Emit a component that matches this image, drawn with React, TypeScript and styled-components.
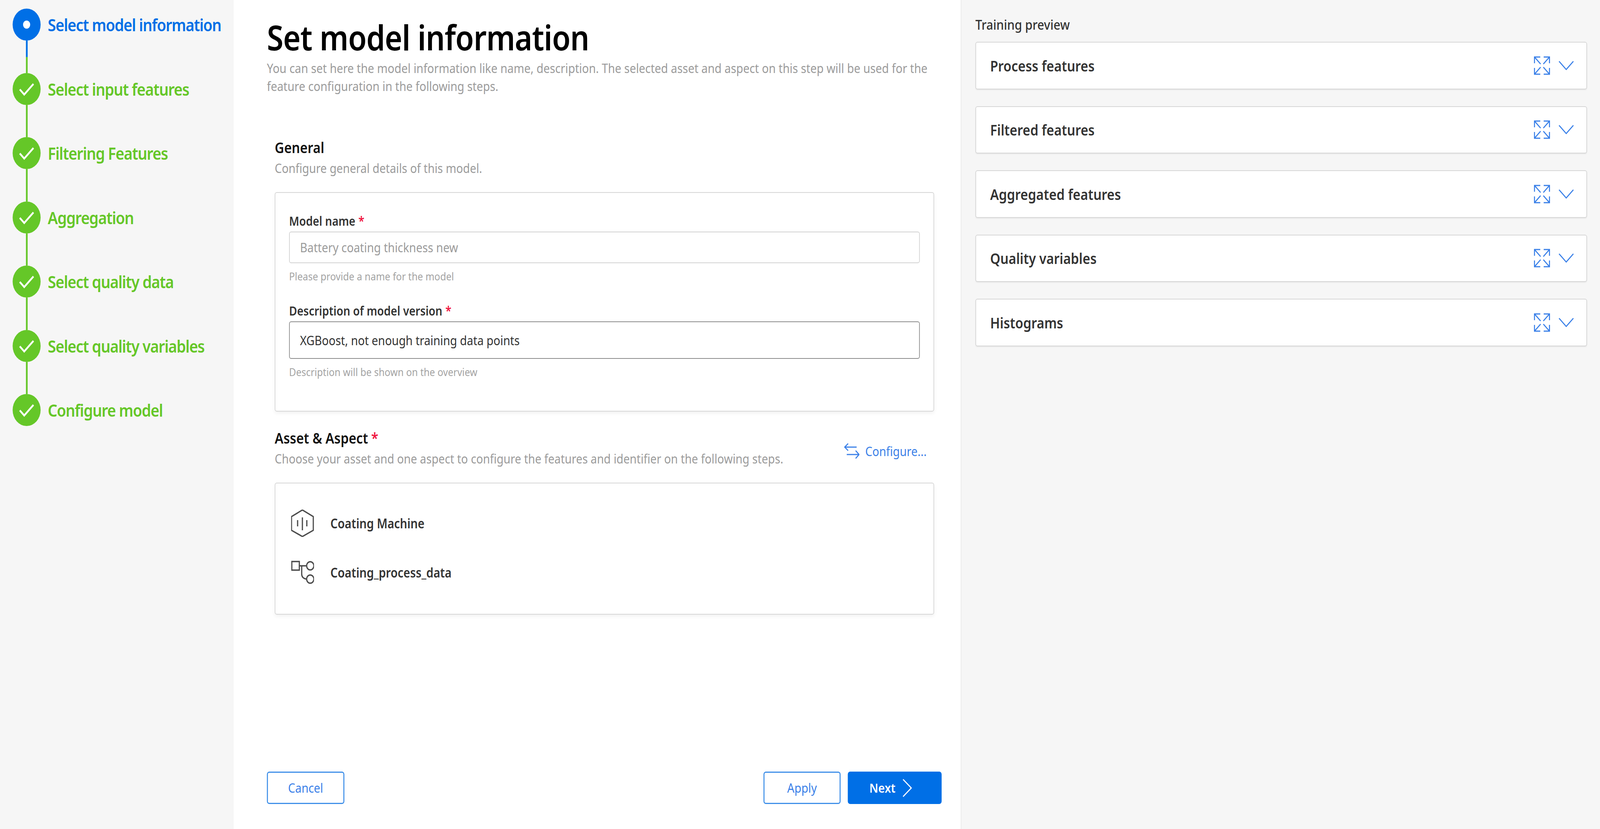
import React from 'react';
import styled, { createGlobalStyle } from 'styled-components';

const GlobalStyle = createGlobalStyle`
  html, body {
    margin: 0;
    width: 100%;
    height: 100%;
    overflow: hidden;
    background: #fff;
  }
  body, input, button {
    font-family: "Noto Sans", "Open Sans", sans-serif;
  }
  * {
    box-sizing: border-box;
  }
`;

const DESIGN_WIDTH = 4688;
const BLUE = '#006fe6';
const GREEN = '#65c728';

const Page = styled.div`
  display: grid;
  grid-template-columns: 685px 2130px 1873px;
  width: ${DESIGN_WIDTH}px;
  height: 2123px;
  transform-origin: 0 0;
`;

const Sidebar = styled.nav`
  background: #f6f6f6;
  padding: 22px 0 0 37px;
`;

const Step = styled.div<{ $active?: boolean }>`
  display: flex;
  gap: 21px;
  height: 164.5px;
  color: ${(p) => (p.$active ? BLUE : GREEN)};
`;

const StepTrack = styled.div`
  display: flex;
  flex-direction: column;
  align-items: center;
  width: 82px;
`;

const StepCircle = styled.div<{ $active?: boolean }>`
  flex: none;
  width: 82px;
  height: 82px;
  border-radius: 50%;
  background: ${(p) => (p.$active ? BLUE : GREEN)};
  display: flex;
  align-items: center;
  justify-content: center;
`;

const Connector = styled.div<{ $active?: boolean }>`
  flex: 1;
  width: 5px;
  background: ${(p) =>
    p.$active ? `linear-gradient(${BLUE} 0 50%, ${GREEN} 50% 100%)` : GREEN};
`;

const StepLabel = styled.span`
  font-size: 44px;
  font-weight: 600;
  line-height: 82px;
  letter-spacing: -1.45px;
  white-space: nowrap;
`;

const Main = styled.main`
  display: flex;
  flex-direction: column;
  padding: 45px 56px 64px 97px;
  background: #fff;
`;

const Title = styled.h1`
  margin: 0;
  font-size: 88px;
  font-weight: 600;
  line-height: 100px;
  color: #000;
  letter-spacing: -1px;
`;

const Lead = styled.p`
  margin: 7px 0 0;
  font-size: 33px;
  line-height: 46px;
  color: #9b9b9b;
`;

const Section = styled.section<{ $top: number }>`
  margin: ${(p) => p.$top}px 22px 0 23px;
`;

const SectionHead = styled.div`
  display: flex;
  justify-content: space-between;
`;

const SectionTitle = styled.h2`
  margin: 0;
  font-size: 38px;
  font-weight: 600;
  line-height: 50px;
  color: #111;
`;

const SectionText = styled.p`
  margin: 9px 0 0;
  font-size: 32.8px;
  line-height: 40px;
  color: #9b9b9b;
`;

const Required = styled.span`
  color: #f0163f;
  margin-left: 9px;
`;

const Card = styled.div<{ $height: number }>`
  height: ${(p) => p.$height}px;
  margin-top: 41px;
  background: #fff;
  border: 2px solid #d6d6d6;
  border-radius: 6px;
  box-shadow: 0 5px 10px rgba(0, 0, 0, 0.05);
`;

const FormCard = styled(Card)`
  padding: 52px 40px 0;
`;

const Label = styled.label`
  display: block;
  font-size: 32px;
  font-weight: 600;
  line-height: 40px;
  color: #333;
`;

const Input = styled.input<{ $filled?: boolean }>`
  display: block;
  width: 100%;
  height: ${(p) => (p.$filled ? 96 : 81)}px;
  margin-top: 7px;
  padding: 0 30px;
  border: 2px solid ${(p) => (p.$filled ? '#8c8c8c' : '#d2d2d2')};
  border-radius: 6px;
  background: #fff;
  font-size: 33px;
  color: #333;
  outline: none;

  &::placeholder {
    color: #9b9b9b;
    opacity: 1;
  }
`;

const Hint = styled.div`
  margin: 18px 0 54px;
  font-size: 28px;
  line-height: 30px;
  color: #a3a3a3;
`;

const ConfigureButton = styled.button`
  display: flex;
  align-items: center;
  gap: 17px;
  height: 40px;
  margin: 39px 22px 0 0;
  padding: 0;
  border: 0;
  background: none;
  font-size: 33px;
  color: #3a80e8;
`;

const AssetList = styled(Card)`
  display: flex;
  flex-direction: column;
  gap: 56px;
  padding: 67px 0 0 46px;
`;

const AssetRow = styled.div`
  display: flex;
  align-items: center;
  gap: 48px;
  height: 70px;
  font-size: 33.6px;
  font-weight: 600;
  color: #333;
`;

const AssetIcon = styled.svg`
  flex: none;
  width: 67px;
  height: 70px;
  fill: none;
  stroke: #4a4a4a;
  stroke-width: 3.5;
`;

const Footer = styled.footer`
  display: flex;
  align-items: center;
  gap: 21px;
  margin-top: auto;
`;

const Button = styled.button<{ $primary?: boolean; $width: number }>`
  display: flex;
  align-items: center;
  justify-content: center;
  gap: 20px;
  width: ${(p) => p.$width}px;
  height: 83px;
  padding: 0 ${(p) => (p.$primary ? 24 : 0)}px 0 0;
  border: 3px solid ${(p) => (p.$primary ? BLUE : '#3f8fe8')};
  border-radius: 7px;
  background: ${(p) => (p.$primary ? BLUE : '#fff')};
  font-size: 33px;
  font-weight: ${(p) => (p.$primary ? 600 : 400)};
  color: ${(p) => (p.$primary ? '#fff' : '#3a80e8')};
`;

const Spacer = styled.div`
  flex: 1;
`;

const Preview = styled.aside`
  display: flex;
  flex-direction: column;
  gap: 43px;
  padding: 41px 38px 0 41px;
  background: #f6f6f6;
  border-left: 2px solid #ebebeb;
`;

const PreviewTitle = styled.h3`
  margin: 0 0 -21px;
  font-size: 35px;
  font-weight: 500;
  line-height: 44px;
  color: #333;
`;

const Panel = styled.div`
  display: flex;
  align-items: center;
  height: 121.5px;
  padding: 0 36px 0 41px;
  background: #fff;
  border: 2px solid #d6d6d6;
  border-radius: 6px;
  box-shadow: 0 2px 3px rgba(0, 0, 0, 0.06);
`;

const PanelTitle = styled.span`
  flex: 1;
  font-size: 38px;
  font-weight: 600;
  color: #333;
`;

const PanelIcons = styled.div`
  display: flex;
  align-items: center;
  gap: 24px;
`;

const BlueIcon = styled.svg`
  flex: none;
  fill: none;
  stroke: #3a80e8;
  stroke-width: 3;
`;

const steps = [
  'Select model information',
  'Select input features',
  'Filtering Features',
  'Aggregation',
  'Select quality data',
  'Select quality variables',
  'Configure model',
];

const panels = [
  'Process features',
  'Filtered features',
  'Aggregated features',
  'Quality variables',
  'Histograms',
];

const CheckMark = () => (
  <svg width="82" height="82" viewBox="0 0 82 82" fill="none">
    <path d="M21 42 34 55 61 28" stroke="#fff" strokeWidth="5" />
  </svg>
);

const ActiveDot = () => (
  <svg width="82" height="82" viewBox="0 0 82 82">
    <circle cx="41" cy="41" r="10.5" fill="#fff" />
  </svg>
);

const ExpandIcon = () => (
  <BlueIcon width="48" height="48" viewBox="0 0 48 48">
    <path d="M2 18V2h17M2 2l18 18M46 18V2H29M46 2 28 20M2 30v16h17M2 46l18-18M46 30v16H29M46 46 28 28" />
  </BlueIcon>
);

const ChevronDown = () => (
  <BlueIcon width="46" height="26" viewBox="0 0 46 26">
    <path d="M2 2 23 23 44 2" />
  </BlueIcon>
);

const SwapIcon = () => (
  <BlueIcon width="45" height="40" viewBox="0 0 45 40">
    <path d="M2 10h35M12 1 2 10l10 9M8 29h36M34 19l10 10-10 10" />
  </BlueIcon>
);

const ChevronRight = () => (
  <svg width="28" height="46" viewBox="0 0 28 46" fill="none">
    <path d="M2 1 26 23 2 45" stroke="#fff" strokeWidth="3" />
  </svg>
);

const MachineIcon = () => (
  <AssetIcon viewBox="0 0 67 70">
    <path d="M33 1 65 18V53L33 69 1 53V18Z" />
    <path d="M33 20V53M19 27V43M46 27V43" />
  </AssetIcon>
);

const AspectIcon = () => (
  <AssetIcon viewBox="0 0 67 70">
    <rect x="2" y="7" width="22" height="22" />
    <circle cx="56" cy="18" r="10.5" />
    <circle cx="56" cy="52" r="10.5" />
    <path d="M24 18H45M31 18V39Q31 50 45 52" />
  </AssetIcon>
);

export default function App() {
  const fit = window.innerWidth / DESIGN_WIDTH;

  return (
    <Page style={{ transform: `scaleX(${fit})` }}>
      <GlobalStyle />
      <Sidebar>
        {steps.map((step, i) => (
          <Step key={step} $active={i === 0}>
            <StepTrack>
              <StepCircle $active={i === 0}>{i === 0 ? <ActiveDot /> : <CheckMark />}</StepCircle>
              {i < steps.length - 1 ? <Connector $active={i === 0} /> : null}
            </StepTrack>
            <StepLabel>{step}</StepLabel>
          </Step>
        ))}
      </Sidebar>

      <Main>
        <Title>Set model information</Title>
        <Lead>
          You can set here the model information like name, description. The selected asset and
          aspect on this step will be used for the
          <br />
          feature configuration in the following steps.
        </Lead>

        <Section $top={108}>
          <SectionTitle>General</SectionTitle>
          <SectionText>Configure general details of this model.</SectionText>
          <FormCard $height={562}>
            <Label>
              Model name<Required>*</Required>
            </Label>
            <Input placeholder="Battery coating thickness new" />
            <Hint>Please provide a name for the model</Hint>
            <Label>
              Description of model version<Required>*</Required>
            </Label>
            <Input $filled readOnly value="XGBoost, not enough training data points" />
            <Hint>Description will be shown on the overview</Hint>
          </FormCard>
        </Section>

        <Section $top={42}>
          <SectionHead>
            <div>
              <SectionTitle>
                Asset &amp; Aspect<Required>*</Required>
              </SectionTitle>
              <SectionText>
                Choose your asset and one aspect to configure the features and identifier on the
                following steps.
              </SectionText>
            </div>
            <ConfigureButton>
              <SwapIcon />
              Configure...
            </ConfigureButton>
          </SectionHead>
          <AssetList $height={338}>
            <AssetRow>
              <MachineIcon />
              Coating Machine
            </AssetRow>
            <AssetRow>
              <AspectIcon />
              Coating_process_data
            </AssetRow>
          </AssetList>
        </Section>

        <Footer>
          <Button $width={227}>Cancel</Button>
          <Spacer />
          <Button $width={226}>Apply</Button>
          <Button $primary $width={275}>
            Next
            <ChevronRight />
          </Button>
        </Footer>
      </Main>

      <Preview>
        <PreviewTitle>Training preview</PreviewTitle>
        {panels.map((panel) => (
          <Panel key={panel}>
            <PanelTitle>{panel}</PanelTitle>
            <PanelIcons>
              <ExpandIcon />
              <ChevronDown />
            </PanelIcons>
          </Panel>
        ))}
      </Preview>
    </Page>
  );
}
